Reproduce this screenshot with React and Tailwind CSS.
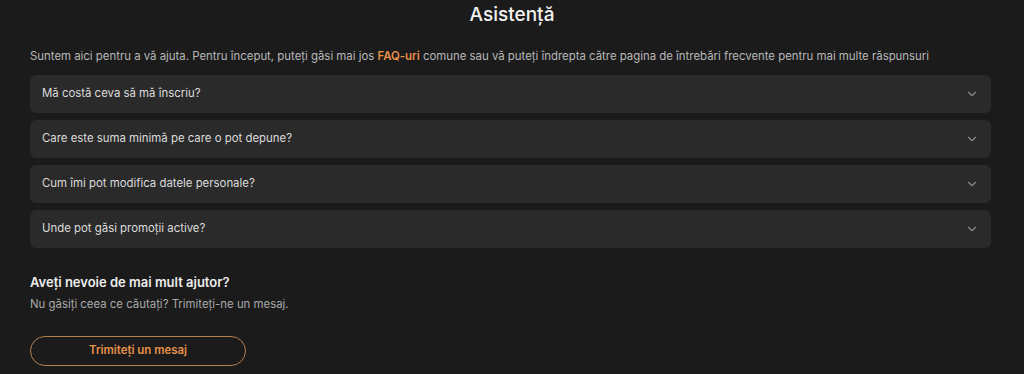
import React from 'react';
import { ChevronDown } from 'lucide-react';

const faqs = [
    'Mă costă ceva să mă înscriu?',
    'Care este suma minimă pe care o pot depune?',
    'Cum îmi pot modifica datele personale?',
    'Unde pot găsi promoții active?',
];

const App = () => {
    return (
        <div className="min-h-screen w-full bg-[#1b1b1b] px-[30px] font-['Inter',sans-serif] text-white">

            {/* TITLE */}
            <h1 className="pt-[3px] text-center text-[19px] leading-[24px] font-medium text-[#f2f2f2]">
                Asistență
            </h1>

            {/* INTRO */}
            <p className="mt-[22px] text-[11.4px] leading-[14px] text-[#b8b8b8]">
                Suntem aici pentru a vă ajuta. Pentru început, puteți găsi mai jos{' '}
                <span className="font-semibold text-[#e8914a]">FAQ-uri</span> comune sau vă puteți îndrepta către pagina de întrebări frecvente pentru mai multe răspunsuri
            </p>

            {/* FAQ LIST */}
            <div className="mt-[12px] flex w-[961px] flex-col gap-[7px]">
                {faqs.map((q) => (
                    <button
                        key={q}
                        className="flex h-[38px] w-full items-center justify-between rounded-[6px] bg-[#2a2a2a] pl-[12px] pr-[12px] text-left"
                    >
                        <span className="text-[11.4px] text-[#dcdcdc]">{q}</span>
                        <ChevronDown size={14} strokeWidth={2} className="text-[#8a8a8a]" />
                    </button>
                ))}
            </div>

            {/* MORE HELP */}
            <h2 className="mt-[26px] text-[13px] leading-[16px] font-semibold text-[#ededed]">
                Aveți nevoie de mai mult ajutor?
            </h2>
            <p className="mt-[7px] text-[11.4px] leading-[14px] text-[#a8a8a8]">
                Nu găsiți ceea ce căutați? Trimiteți-ne un mesaj.
            </p>

            <button className="mt-[25px] flex h-[30px] w-[216px] items-center justify-center rounded-full border border-[#b5804f] text-[11.4px] font-semibold text-[#e8914a]">
                Trimiteți un mesaj
            </button>
        </div>
    );
};

export default App;
